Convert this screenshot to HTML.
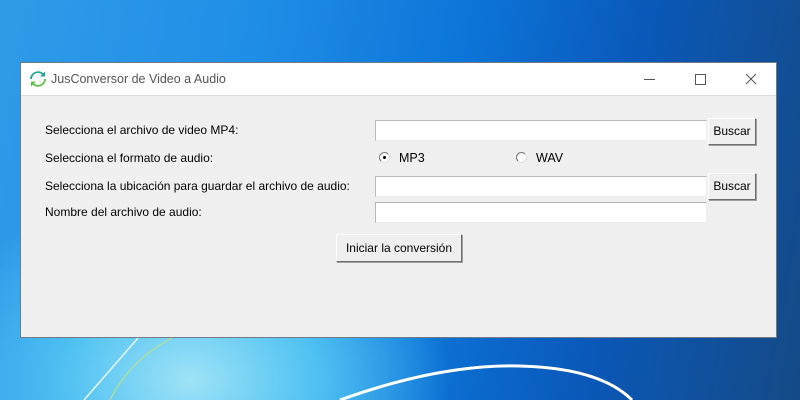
<!DOCTYPE html>
<html><head><meta charset="utf-8"><style>
*{margin:0;padding:0;box-sizing:border-box}
body{width:800px;height:400px;overflow:hidden;position:relative;font-family:"Liberation Sans",sans-serif;
background:radial-gradient(ellipse 260px 200px at 190px 380px,#9ee3f7 0%,#4dc0f2 50%,rgba(30,140,230,0) 100%),
linear-gradient(100deg,#2f9be8 0%,#1f8ee6 30%,#0c74d8 55%,#0a58b8 75%,#154a86 100%);}
.win{position:absolute;left:20px;top:62px;width:757px;height:276px;background:#f0f0f0;border:1px solid #6f7a86;}
.title{height:33px;background:#fff;border-bottom:1px solid #dcdcdc;position:relative;font-size:12.5px;color:#555}
.title span{position:absolute;left:30px;top:9px}
.lbl{position:absolute;left:24px;font-size:12px;color:#000}
.ent{position:absolute;left:354px;width:332px;height:21px;background:#fff;border:1px solid #b8b8b8;border-bottom-color:#eee;border-right-color:#eee}
.btn{position:absolute;background:#efefef;border:1px solid;border-color:#fff #6e6e6e #6e6e6e #fff;box-shadow:1px 1px 0 #a0a0a0;font-size:12px;text-align:center;color:#000}
.rad{position:absolute;width:11px;height:11px;border-radius:50%;border:1px solid #888;border-color:#777 #ddd #ddd #777;background:#fff}
</style></head><body>
<div class="win">
 <div class="title">
  <svg style="position:absolute;left:8px;top:7px" width="18" height="18" viewBox="0 0 18 18"><path d="M3 9a6 6 0 0 1 10-4.5L11 6.5h5v-5l-1.8 1.8A8 8 0 0 0 1 9z" fill="#1fa39a"/><path d="M15 9a6 6 0 0 1-10 4.5L7 11.5H2v5l1.8-1.8A8 8 0 0 0 17 9z" fill="#5cc243"/></svg>
  <span>JusConversor de Video a Audio</span>
  <div style="position:absolute;left:623px;top:16px;width:11px;height:1px;background:#555"></div>
  <div style="position:absolute;left:674px;top:11px;width:11px;height:11px;border:1px solid #555"></div>
  <svg style="position:absolute;left:724px;top:10px" width="12" height="12"><path d="M1 1L11 11M11 1L1 11" stroke="#555" stroke-width="1"/></svg>
 </div>
 <div class="lbl" style="top:60px">Selecciona el archivo de video MP4:</div>
 <div class="lbl" style="top:88px">Selecciona el formato de audio:</div>
 <div class="lbl" style="top:116px">Selecciona la ubicación para guardar el archivo de audio:</div>
 <div class="lbl" style="top:142px">Nombre del archivo de audio:</div>
 <div class="ent" style="top:57px"></div>
 <div class="ent" style="top:113px"></div>
 <div class="ent" style="top:139px"></div>
 <div class="btn" style="left:687px;top:55px;width:48px;height:27px;line-height:25px">Buscar</div>
 <div class="btn" style="left:687px;top:110px;width:48px;height:27px;line-height:25px">Buscar</div>
 <div class="btn" style="left:315px;top:171px;width:126px;height:28px;line-height:26px">Iniciar la conversión</div>
 <div class="rad" style="left:358px;top:89px"><div style="position:absolute;left:3px;top:3px;width:3px;height:3px;border-radius:50%;background:#000"></div></div>
 <div class="lbl" style="left:378px;top:88px;font-size:12.5px">MP3</div>
 <div class="rad" style="left:495px;top:89px"></div>
 <div class="lbl" style="left:515px;top:88px;font-size:12.5px">WAV</div>
</div>
<svg style="position:absolute;left:0;top:0" width="800" height="400"><path d="M84 400L138 338" stroke="#e8f6ff" stroke-width="1.5" fill="none"/><path d="M110 400Q130 360 172 338" stroke="#b8e08a" stroke-width="1.2" fill="none"/><path d="M340 400Q440 364 520 366Q600 368 632 400" stroke="#fff" stroke-width="3" fill="none"/></svg>
</body></html>
